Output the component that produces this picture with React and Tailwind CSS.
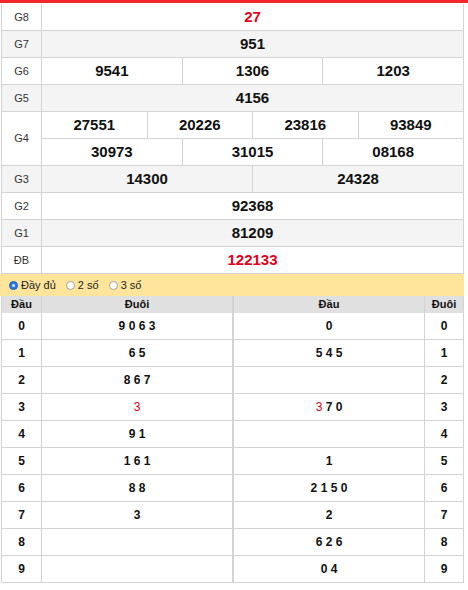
import React from "react";

const font = { fontFamily: '"Liberation Sans", Arial, sans-serif' };

const prizes = [
  { label: "G8", rows: [["27"]], red: true },
  { label: "G7", rows: [["951"]] },
  { label: "G6", rows: [["9541", "1306", "1203"]] },
  { label: "G5", rows: [["4156"]] },
  {
    label: "G4",
    rows: [
      ["27551", "20226", "23816", "93849"],
      ["30973", "31015", "08168"],
    ],
  },
  { label: "G3", rows: [["14300", "24328"]] },
  { label: "G2", rows: [["92368"]] },
  { label: "G1", rows: [["81209"]] },
  { label: "ĐB", rows: [["122133"]], red: true },
];

// digits; "r" suffix = red
const dauList = [
  ["9", "0", "6", "3"],
  ["6", "5"],
  ["8", "6", "7"],
  ["3r"],
  ["9", "1"],
  ["1", "6", "1"],
  ["8", "8"],
  ["3"],
  [],
  [],
];

const duoiList = [
  ["0"],
  ["5", "4", "5"],
  [],
  ["3r", "7", "0"],
  [],
  ["1"],
  ["2", "1", "5", "0"],
  ["2"],
  ["6", "2", "6"],
  ["0", "4"],
];

const Digits = ({ items }) => (
  <span className="text-[12px]">
    {items.map((d, i) => (
      <React.Fragment key={i}>
        {i > 0 && " "}
        {d.endsWith("r") ? (
          <span className="text-[#e3001b] font-normal">{d[0]}</span>
        ) : (
          <span className="font-bold">{d}</span>
        )}
      </React.Fragment>
    ))}
  </span>
);

const Radio = ({ checked, label }) => (
  <span className="flex items-center gap-[3px]">
    {checked ? (
      <span className="w-[9px] h-[9px] rounded-full bg-[#2a7ae2] border border-[#1b64c8] flex items-center justify-center">
        <span className="w-[3px] h-[3px] rounded-full bg-[#dbe9fb]" />
      </span>
    ) : (
      <span className="w-[9px] h-[9px] rounded-full bg-white border border-[#a0a0a0]" />
    )}
    <span className="text-[11px] text-[#222]">{label}</span>
  </span>
);

export default function App() {
  return (
    <div style={font} className="w-[468px] h-[590px] bg-white text-[#111]">
      <div className="h-[3px] bg-[#f0282e]" />
      <div className="ml-px w-[463px] pt-px">
        {prizes.map((p, idx) => (
          <div
            key={p.label}
            className={`flex border-x border-b border-[#d3d3d3] ${
              idx % 2 === 1 ? "bg-[#f4f4f4]" : "bg-white"
            }`}
          >
            <div className="w-[40px] shrink-0 border-r border-[#d3d3d3] flex items-center justify-center text-[11px] text-[#333]">
              {p.label}
            </div>
            <div className="flex-1 flex flex-col">
              {p.rows.map((row, ri) => (
                <div
                  key={ri}
                  className={`flex h-[26px] ${
                    ri < p.rows.length - 1 ? "h-[27px] border-b border-[#d3d3d3]" : ""
                  }`}
                >
                  {row.map((n, ci) => (
                    <div
                      key={ci}
                      className={`flex-1 flex items-center justify-center text-[15px] font-bold ${
                        p.red ? "text-[#e3001b]" : "text-[#111]"
                      } ${ci < row.length - 1 ? "border-r border-[#d3d3d3]" : ""}`}
                    >
                      {n}
                    </div>
                  ))}
                </div>
              ))}
            </div>
          </div>
        ))}

        <div className="h-[22px] bg-[#fee59b] flex items-center gap-[10px] pl-[9px] -ml-px w-[464px]">
          <Radio checked label="Đầy đủ" />
          <Radio label="2 số" />
          <Radio label="3 số" />
        </div>

        <div className="flex h-[17px] bg-[#e0e0e0] border-x border-[#d3d3d3] text-[11px] font-bold">
          <div className="w-[40px] shrink-0 border-r border-[#d3d3d3] flex items-center justify-center">
            Đầu
          </div>
          <div className="w-[191px] shrink-0 border-r border-[#d3d3d3] flex items-center justify-center">
            Đuôi
          </div>
          <div className="w-[192px] shrink-0 border-x border-[#d3d3d3] flex items-center justify-center">
            Đầu
          </div>
          <div className="flex-1 flex items-center justify-center">Đuôi</div>
        </div>

        {dauList.map((left, i) => (
          <div
            key={i}
            className="flex h-[27px] border-x border-b border-[#d3d3d3] bg-white"
          >
            <div className="w-[40px] shrink-0 border-r border-[#d3d3d3] flex items-center justify-center text-[12px] font-bold">
              {i}
            </div>
            <div className="w-[191px] shrink-0 border-r border-[#d3d3d3] flex items-center justify-center">
              <Digits items={left} />
            </div>
            <div className="w-[192px] shrink-0 border-x border-[#d3d3d3] flex items-center justify-center">
              <Digits items={duoiList[i]} />
            </div>
            <div className="flex-1 flex items-center justify-center text-[12px] font-bold">
              {i}
            </div>
          </div>
        ))}
      </div>
    </div>
  );
}
